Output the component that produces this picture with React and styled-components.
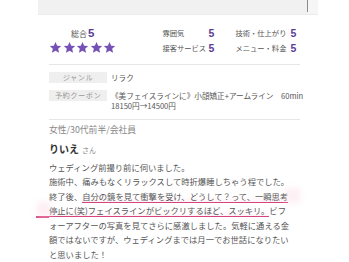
import React from 'react'
import styled, { createGlobalStyle } from 'styled-components'

const GlobalStyle = createGlobalStyle`
  html, body {
    margin: 0;
    padding: 0;
    background: #fff;
  }
  body {
    font-family: "Noto Sans CJK JP", "Noto Sans", sans-serif;
    color: #555;
  }
`

const Page = styled.div`
  width: 349px;
  height: 262px;
  overflow: hidden;
`

const TopBar = styled.div`
  display: flex;
  margin-left: 38px;
  width: 280px;
  height: 14px;
  background: #f1f1f1;
  border-bottom: 1px solid #ececec;
`

const TopFill = styled.div`
  flex: 1;
`

const TopEdge = styled.div`
  width: 1px;
  height: 12px;
  background: #8a8a8a;
`

const TopTrack = styled.div`
  width: 10px;
  background: #f6f6f6;
`

const Content = styled.div`
  margin-left: 49px;
  width: 251px;
`

const Scores = styled.div`
  display: flex;
  padding: 11px 0 9px;
  border-bottom: 1px solid #e6e6e6;
`

const Total = styled.div`
  width: 70px;
  display: flex;
  flex-direction: column;
  align-items: center;
`

const TotalLabel = styled.div`
  font-size: 8px;
  line-height: 14px;
  color: #555;
  display: flex;
  align-items: baseline;
`

const Num = styled.span`
  font-family: "Liberation Sans", Arial, sans-serif;
  font-size: ${p => p.size || 11}px;
  color: #5b3e94;
  font-weight: 600;
  margin-left: ${p => p.gap || 0}px;
`

const Stars = styled.div`
  display: flex;
  gap: 0.6px;
`

const Star = () => (
  <svg width="13" height="13" viewBox="0 0 24 24">
    <path
      d="M12 1.8l3.1 6.9 7.4.7-5.6 5 1.7 7.4L12 17.9l-6.6 3.9 1.7-7.4-5.6-5 7.4-.7z"
      fill="#7550b5"
    />
  </svg>
)

const Details = styled.div`
  margin-left: 46px;
  display: grid;
  grid-template-columns: 46px 27px 55px 10px;
  grid-auto-rows: 14.5px;
  align-items: center;
`

const DetailLabel = styled.span`
  font-size: 7.3px;
  color: #555;
  white-space: nowrap;
`

const Info = styled.div`
  padding: 7px 0 8px;
  border-bottom: 1px solid #e6e6e6;
  display: flex;
  flex-direction: column;
  gap: 7px;
`

const InfoRow = styled.div`
  display: flex;
  align-items: flex-start;
`

const InfoLabel = styled.div`
  width: 58px;
  flex-shrink: 0;
  height: 11px;
  line-height: 11px;
  background: #efefef;
  color: #999;
  font-size: 7.3px;
  text-align: center;
  letter-spacing: 0.4px;
`

const InfoValue = styled.div`
  margin-left: 4px;
  font-size: 7.6px;
  line-height: 10px;
  margin-top: 0.5px;
  color: #555;
  white-space: nowrap;
`

const Profile = styled.div`
  margin-top: 3px;
  font-size: 8.8px;
  line-height: 14px;
  color: #888;
`

const Name = styled.div`
  margin-top: 5px;
  font-size: 10px;
  line-height: 14px;
  font-weight: 700;
  color: #333;
`

const San = styled.span`
  font-size: 7px;
  font-weight: 400;
  color: #888;
  margin-left: 3px;
`

const Body = styled.div`
  margin-top: 3px;
  font-size: 8.3px;
  line-height: 14.6px;
  color: #555;
`

const Line = styled.div`
  white-space: nowrap;
`

const Mark = styled.span`
  position: relative;
  border-bottom: 1.3px solid #d8437d;
  background: linear-gradient(to bottom, rgba(255, 255, 255, 0) 50%, rgba(252, 228, 237, 0.4) 100%);

  &::before {
    content: '';
    display: ${p => (p.extend ? 'block' : 'none')};
    position: absolute;
    left: -${p => p.extend || 0}px;
    bottom: -1.3px;
    width: ${p => p.extend || 0}px;
    height: 1.3px;
    background: #d8437d;
  }
`

const Glow = styled.span`
  position: absolute;
  top: -2px;
  ${p => p.side}: -12px;
  width: 14px;
  height: 15px;
  background: rgba(252, 222, 234, 0.5);
  filter: blur(3px);
  pointer-events: none;
`

const details = [
  ['雰囲気', '技術・仕上がり'],
  ['接客サービス', 'メニュー・料金'],
]

export default function App() {
  return (
    <Page>
      <GlobalStyle />
      <TopBar>
        <TopFill />
        <TopEdge />
        <TopTrack />
      </TopBar>
      <Content>
        <Scores>
          <Total>
            <TotalLabel>
              総合<Num size={11.5} gap={1}>5</Num>
            </TotalLabel>
            <Stars>
              {[0, 1, 2, 3, 4].map(i => <Star key={i} />)}
            </Stars>
          </Total>
          <Details>
            {details.map(([a, b]) => (
              <React.Fragment key={a}>
                <DetailLabel>{a}</DetailLabel>
                <Num size={10.5}>5</Num>
                <DetailLabel>{b}</DetailLabel>
                <Num size={10.5}>5</Num>
              </React.Fragment>
            ))}
          </Details>
        </Scores>
        <Info>
          <InfoRow>
            <InfoLabel>ジャンル</InfoLabel>
            <InfoValue>リラク</InfoValue>
          </InfoRow>
          <InfoRow>
            <InfoLabel>予約クーポン</InfoLabel>
            <InfoValue>
              《美フェイスラインに》小顔矯正+アームライン　60min
              <br />
              18150円→14500円
            </InfoValue>
          </InfoRow>
        </Info>
        <Profile>女性/30代前半/会社員</Profile>
        <Name>
          りいえ<San>さん</San>
        </Name>
        <Body>
          <Line>ウェディング前撮り前に伺いました。</Line>
          <Line>施術中、痛みもなくリラックスして時折爆睡しちゃう程でした。</Line>
          <Line>
            終了後、<Mark>自分の鏡を見て衝撃を受け、どうして？って、一瞬思考<Glow side="right" /></Mark>
          </Line>
          <Line>
            <Mark extend={13}><Glow side="left" />停止に(笑)フェイスラインがビックリするほど、スッキリ。</Mark>ビフ
          </Line>
          <Line>ォーアフターの写真を見てさらに感激しました。気軽に通える金</Line>
          <Line>額ではないですが、ウェディングまでは月一でお世話になりたい</Line>
          <Line>と思いました！</Line>
        </Body>
      </Content>
    </Page>
  )
}
